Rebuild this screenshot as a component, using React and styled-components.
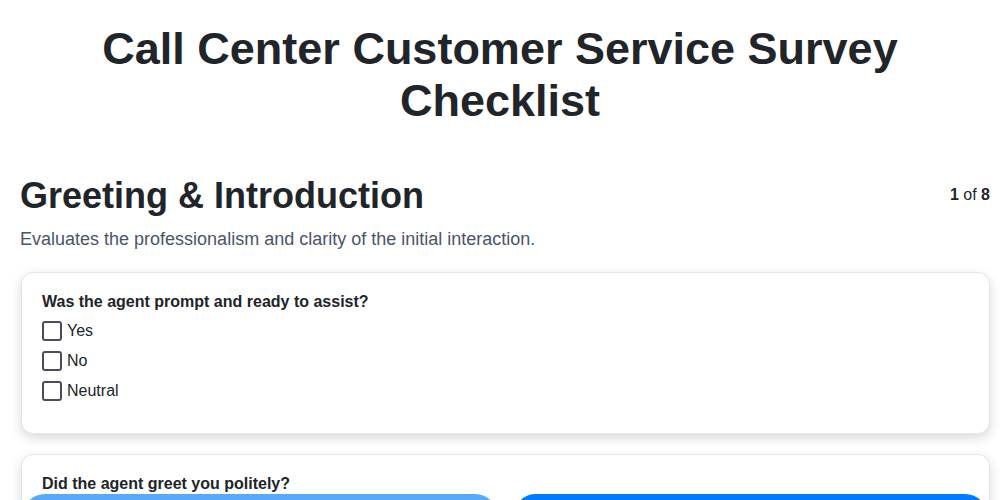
import React, { useState } from 'react';
import styled, { createGlobalStyle } from 'styled-components';

const GlobalStyle = createGlobalStyle`
  body {
    margin: 0;
    background: #fff;
    font-family: "Liberation Sans", Arial, sans-serif;
    color: #212529;
  }
`;

const Page = styled.div`
  padding: 0 10px 0 20px;
`;

// spans the full window so the heading sits on its centre line
const Title = styled.h1`
  margin: 23px 0 47px -10px;
  text-align: center;
  font-size: 45px;
  line-height: 52px;
  font-weight: 700;
  color: #212529;
`;

const SectionHeader = styled.div`
  display: flex;
  justify-content: space-between;
  align-items: flex-start;
`;

const SectionTitle = styled.h2`
  margin: 0;
  font-size: 36px;
  line-height: 44px;
  font-weight: 700;
`;

const Progress = styled.div`
  font-size: 16px;
  margin-top: 12px;

  b {
    font-weight: 700;
  }
`;

const Description = styled.p`
  margin: 11px 0 22px;
  font-size: 18px;
  line-height: 21px;
  color: #4a5568;
`;

const Card = styled.div`
  background: #fff;
  border: 1px solid #e4e4ec;
  border-radius: 12px;
  box-shadow: 0 4px 12px rgba(0, 0, 0, 0.15);
  padding: 20px 20px 27px;
  margin: 0 0 20px 1px;
`;

const Question = styled.div`
  font-size: 16px;
  font-weight: 700;
  margin-bottom: 5px;
`;

const Option = styled.label`
  display: flex;
  align-items: center;
  gap: 5px;
  height: 30px;
  font-size: 16px;
  cursor: pointer;
`;

const Box = styled.span`
  width: 16px;
  height: 16px;
  border: 2px solid #4a4c5c;
  border-radius: 3px;
  background: ${(p) => (p.checked ? '#007bff' : '#fff')};
`;

const Footer = styled.div`
  position: fixed;
  left: 22px;
  right: 12px;
  bottom: -40px;
  display: grid;
  grid-template-columns: 1fr 1fr;
  gap: 15px;
`;

const NavButton = styled.button`
  height: 46px;
  border: none;
  border-radius: 23px;
  font-family: inherit;
  font-size: 16px;
  color: #fff;
  background: ${(p) => (p.primary ? '#007bff' : '#59a9fb')};
`;

const questions = [
  'Was the agent prompt and ready to assist?',
  'Did the agent greet you politely?',
  'Did the agent introduce themselves clearly?',
];

const options = ['Yes', 'No', 'Neutral'];

export default function App() {
  const [answers, setAnswers] = useState({});

  const toggle = (q, o) => {
    setAnswers((a) => ({ ...a, [q]: a[q] === o ? null : o }));
  };

  return (
    <Page>
      <GlobalStyle />
      <Title>Call Center Customer Service Survey Checklist</Title>
      <SectionHeader>
        <SectionTitle>Greeting &amp; Introduction</SectionTitle>
        <Progress>
          <b>1</b> of <b>8</b>
        </Progress>
      </SectionHeader>
      <Description>Evaluates the professionalism and clarity of the initial interaction.</Description>
      {questions.map((q) => (
        <Card key={q}>
          <Question>{q}</Question>
          {options.map((o) => (
            <Option key={o} onClick={() => toggle(q, o)}>
              <Box checked={answers[q] === o} />
              {o}
            </Option>
          ))}
        </Card>
      ))}
      <Footer>
        <NavButton>Previous</NavButton>
        <NavButton primary>Next</NavButton>
      </Footer>
    </Page>
  );
}
